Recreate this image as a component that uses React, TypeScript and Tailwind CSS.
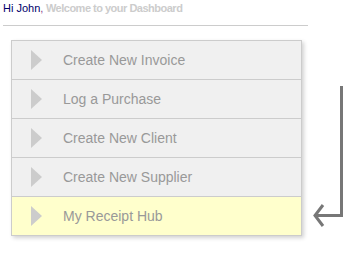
import React from "react";

const items = [
  "Create New Invoice",
  "Log a Purchase",
  "Create New Client",
  "Create New Supplier",
  "My Receipt Hub",
];

export default function App() {
  return (
    <div className="relative w-[344px] h-[255px] bg-white overflow-hidden" style={{ fontFamily: '"Liberation Sans", Arial, sans-serif' }}>
      <div className="pl-[3px] pt-[2px] h-[15px] text-[11px] leading-[13px]">
        <span className="text-[#00006a]">Hi John</span>
        <span className="text-[#8a3d8a]">,</span>
        <span className="text-[#cccccc] font-bold tracking-[-0.5px]"> Welcome to your Dashboard</span>
      </div>
      <div className="ml-[3px] mt-[10px] w-[305px] h-px bg-[#cccccc]" />
      <div className="ml-[11px] mt-[14px] w-[291px] border border-[#cccccc] shadow-[2px_2px_4px_rgba(0,0,0,0.18)]">
        {items.map((t, i) => (
          <div
            key={t}
            className={`flex items-center ${i > 0 ? "h-[39px] border-t border-[#cccccc]" : "h-[38px]"} ${i === 4 ? "bg-[#ffffcc]" : "bg-[#f0f0f0]"}`}
          >
            <svg width="11" height="20" viewBox="0 0 11 20" className="ml-[19px] mr-[21px]">
              <polygon points="0,0 11,10 0,20" fill="#cccccc" />
            </svg>
            <span className="text-[14px] text-[#999999]">{t}</span>
          </div>
        ))}
      </div>
      <svg className="absolute left-[310px] top-[84px]" width="34" height="146" viewBox="0 0 34 146">
        <path d="M31.5 2 V131.5 H6" fill="none" stroke="#777777" strokeWidth="3" />
        <path d="M13 121 L5 131.5 L13 142" fill="none" stroke="#777777" strokeWidth="3" strokeLinejoin="miter" />
      </svg>
    </div>
  );
}
